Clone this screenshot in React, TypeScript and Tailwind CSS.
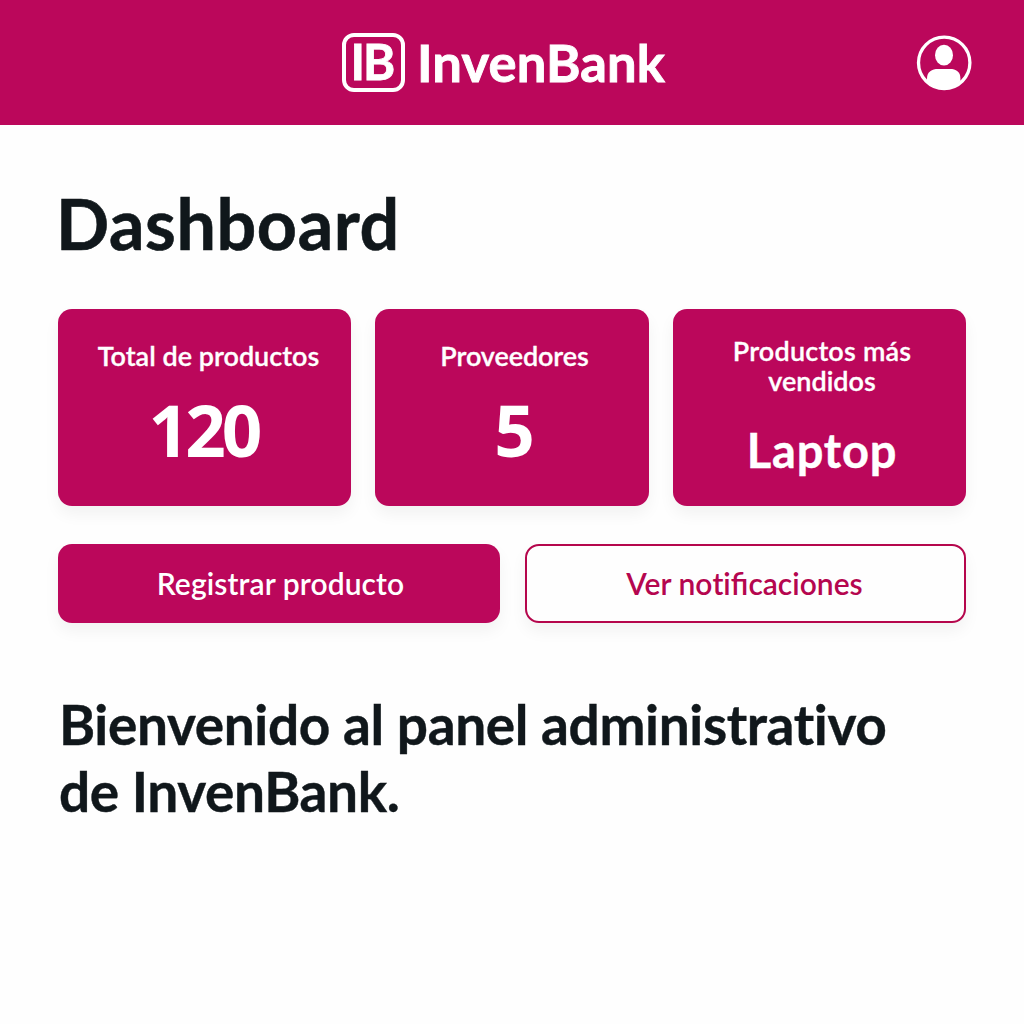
import type { ReactNode } from "react";

function UserIcon() {
  return (
    <svg width="56" height="56" viewBox="0 0 56 56" fill="none" aria-label="Perfil">
      <circle cx="28.2" cy="27.8" r="25.7" stroke="white" strokeWidth="3.3" />
      <ellipse cx="28" cy="20.2" rx="9" ry="10.4" fill="white" />
      <path
        d="M11 46V43.5C11 36.5 16 34 22 34H34C40 34 44.4 36.5 44.4 43.5V46C40 51 34 53.4 28 53.4C22 53.4 16 51 11 46Z"
        fill="white"
      />
    </svg>
  );
}

function Card({ className, children }: { className: string; children: ReactNode }) {
  return (
    <div
      className={`flex h-[197px] flex-col rounded-[14px] bg-[#bb075b] text-center text-white shadow-[0_8px_16px_rgba(0,0,0,0.05)] ${className}`}
    >
      {children}
    </div>
  );
}

export default function App() {
  return (
    <div className="min-h-[1024px] w-full bg-[#fefefe] font-['Lato','Open_Sans',sans-serif] text-[#10171b]">
      <header className="grid h-[125px] grid-cols-[342px_1fr_108px] items-center bg-[#bb075b] text-white">
        <div />
        <div className="flex items-center gap-[12px]">
          <div className="flex h-[59px] w-[63px] items-center justify-center rounded-[12px] border-4 border-white pr-[3px] pb-[2px] text-[49px] leading-none font-bold tracking-[-2px] [-webkit-text-stroke:0.8px_white]">
            IB
          </div>
          <div className="pb-px text-[52.5px] leading-none font-bold tracking-[0.15px] [-webkit-text-stroke:0.9px_white]">
            InvenBank
          </div>
        </div>
        <UserIcon />
      </header>

      <main className="px-[58px]">
        <h1 className="-ml-[2px] pt-[63px] text-[70px] leading-[70px] font-bold tracking-[0.6px] [-webkit-text-stroke:0.6px_#10171b]">
          Dashboard
        </h1>

        <section className="mt-[51px] grid grid-cols-[293px_274px_293px] gap-[24px]">
          <Card className="pt-[32px] pl-[8px]">
            <div className="text-[27px] leading-[30px] font-semibold [-webkit-text-stroke:0.3px_white]">
              Total de productos
            </div>
            <div className="mt-[23px] mr-[10px] font-['Open_Sans',sans-serif] text-[71px] leading-[72px] font-bold tracking-[-4px]">
              120
            </div>
          </Card>
          <Card className="pt-[32px] pl-[5px]">
            <div className="text-[27px] leading-[30px] font-semibold tracking-[-0.1px] [-webkit-text-stroke:0.3px_white]">
              Proveedores
            </div>
            <div className="mt-[23px] font-['Open_Sans',sans-serif] text-[71px] leading-[72px] font-bold">5</div>
          </Card>
          <Card className="pt-[27px] pl-[5px]">
            <div className="text-[27px] leading-[30px] font-semibold tracking-[0.2px] [-webkit-text-stroke:0.3px_white]">
              Productos más
              <br />
              <span className="tracking-normal">vendidos</span>
            </div>
            <div className="mt-[26px] text-[47px] leading-[56px] font-bold tracking-[0.8px] [-webkit-text-stroke:0.4px_white]">
              Laptop
            </div>
          </Card>
        </section>

        <section className="mt-[38px] flex justify-between">
          <button className="h-[79px] w-[442px] rounded-[14px] bg-[#bb075b] pb-px pl-[3px] text-[30px] leading-[36px] font-semibold tracking-[0.1px] text-white shadow-[0_8px_16px_rgba(0,0,0,0.05)]">
            Registrar producto
          </button>
          <button className="h-[79px] w-[441px] rounded-[14px] border-2 border-[#b5064c] bg-[#fefefe] pr-[2px] pb-px text-[30px] leading-[36px] font-semibold text-[#b5064f] shadow-[0_8px_16px_rgba(0,0,0,0.05)]">
            Ver no<span className="[font-variant-ligatures:none]">ti</span>ficaciones
          </button>
        </section>

        <p className="mt-[68px] ml-px text-[55px] leading-[66.5px] font-bold tracking-[-0.38px] [-webkit-text-stroke:0.4px_#10171b]">
          Bienvenido al panel administrativo
          <br />
          de InvenBank.
        </p>
      </main>
    </div>
  );
}
